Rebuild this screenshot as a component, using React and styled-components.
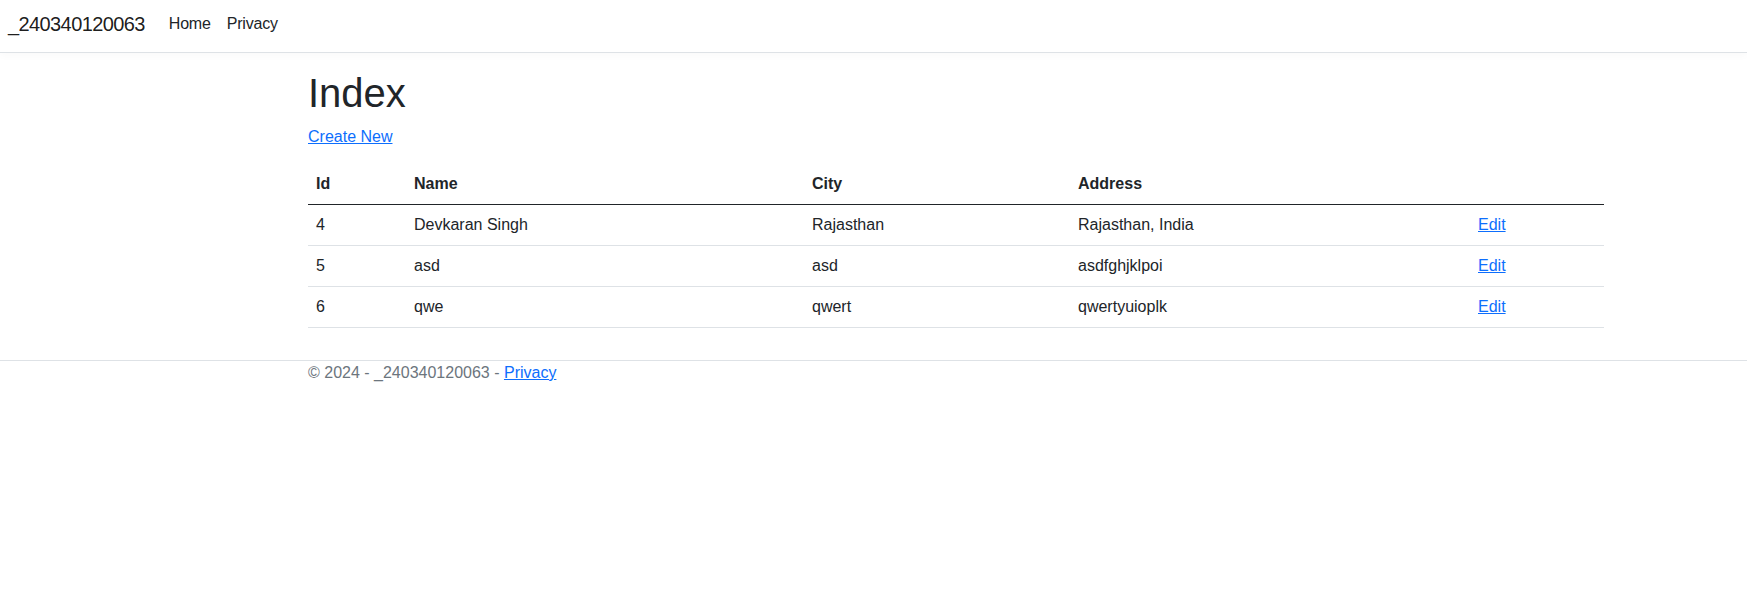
import React from "react";
import styled, { createGlobalStyle } from "styled-components";

const Global = createGlobalStyle`
  html, body { margin: 0; padding: 0; background: #fff; }
  body {
    font-family: "Liberation Sans", Arial, sans-serif;
    font-size: 16px;
    line-height: 1.5;
    color: #212529;
  }
  * { box-sizing: border-box; }
`;

const Navbar = styled.header`
  display: flex;
  align-items: center;
  padding: 4px 8px 8px 8px;
  border-bottom: 1px solid #dee2e6;
  box-shadow: 0 3px 8px rgba(0, 0, 0, 0.025);
  margin-bottom: 16px;
`;

const Brand = styled.a`
  font-size: 20px;
  line-height: 30px;
  padding: 5px 0;
  margin-right: 16px;
  letter-spacing: -0.6px;
  color: rgba(0, 0, 0, 0.9);
  text-decoration: none;
`;

const NavList = styled.nav`
  display: flex;
`;

const NavLink = styled.a`
  padding: 8px;
  color: #212529;
  text-decoration: none;
  line-height: 24px;
  letter-spacing: -0.2px;
`;

const Container = styled.div`
  width: 1296px;
  margin-left: 308px;
`;

const Main = styled.main`
  padding-bottom: 16px;
`;

const Title = styled.h1`
  margin: 0 0 8px;
  font-size: 40px;
  font-weight: 500;
  line-height: 1.2;
`;

const Para = styled.p`
  margin: 0 0 15px;
`;

const Link = styled.a`
  color: #0d6efd;
  text-decoration: underline;
`;

const Table = styled.table`
  width: 100%;
  border-collapse: collapse;
  margin-bottom: 16px;
  color: #212529;
`;

const Th = styled.th`
  text-align: left;
  font-weight: 700;
  padding: 8px;
  width: ${(p) => p.$w || "auto"};
  border-bottom: 1px solid #212529;
`;

const Td = styled.td`
  padding: 8px;
  border-bottom: 1px solid #dee2e6;
`;

const Footer = styled.footer`
  border-top: 1px solid #dee2e6;
  color: #6c757d;
  line-height: 24px;
`;

const rows = [
  { id: 4, name: "Devkaran Singh", city: "Rajasthan", address: "Rajasthan, India" },
  { id: 5, name: "asd", city: "asd", address: "asdfghjklpoi" },
  { id: 6, name: "qwe", city: "qwert", address: "qwertyuioplk" },
];

export default function App() {
  return (
    <>
      <Global />
      <Navbar>
        <Brand href="#">_240340120063</Brand>
        <NavList>
          <NavLink href="#">Home</NavLink>
          <NavLink href="#">Privacy</NavLink>
        </NavList>
      </Navbar>
      <Container>
        <Main>
          <Title>Index</Title>
          <Para>
            <Link href="#">Create New</Link>
          </Para>
          <Table>
            <thead>
              <tr>
                <Th $w="98px">Id</Th>
                <Th $w="398px">Name</Th>
                <Th $w="266px">City</Th>
                <Th $w="400px">Address</Th>
                <Th></Th>
              </tr>
            </thead>
            <tbody>
              {rows.map((r) => (
                <tr key={r.id}>
                  <Td>{r.id}</Td>
                  <Td>{r.name}</Td>
                  <Td>{r.city}</Td>
                  <Td>{r.address}</Td>
                  <Td>
                    <Link href="#">Edit</Link>
                  </Td>
                </tr>
              ))}
            </tbody>
          </Table>
        </Main>
      </Container>
      <Footer>
        <Container>
          © 2024 - _240340120063 - <Link href="#">Privacy</Link>
        </Container>
      </Footer>
    </>
  );
}
